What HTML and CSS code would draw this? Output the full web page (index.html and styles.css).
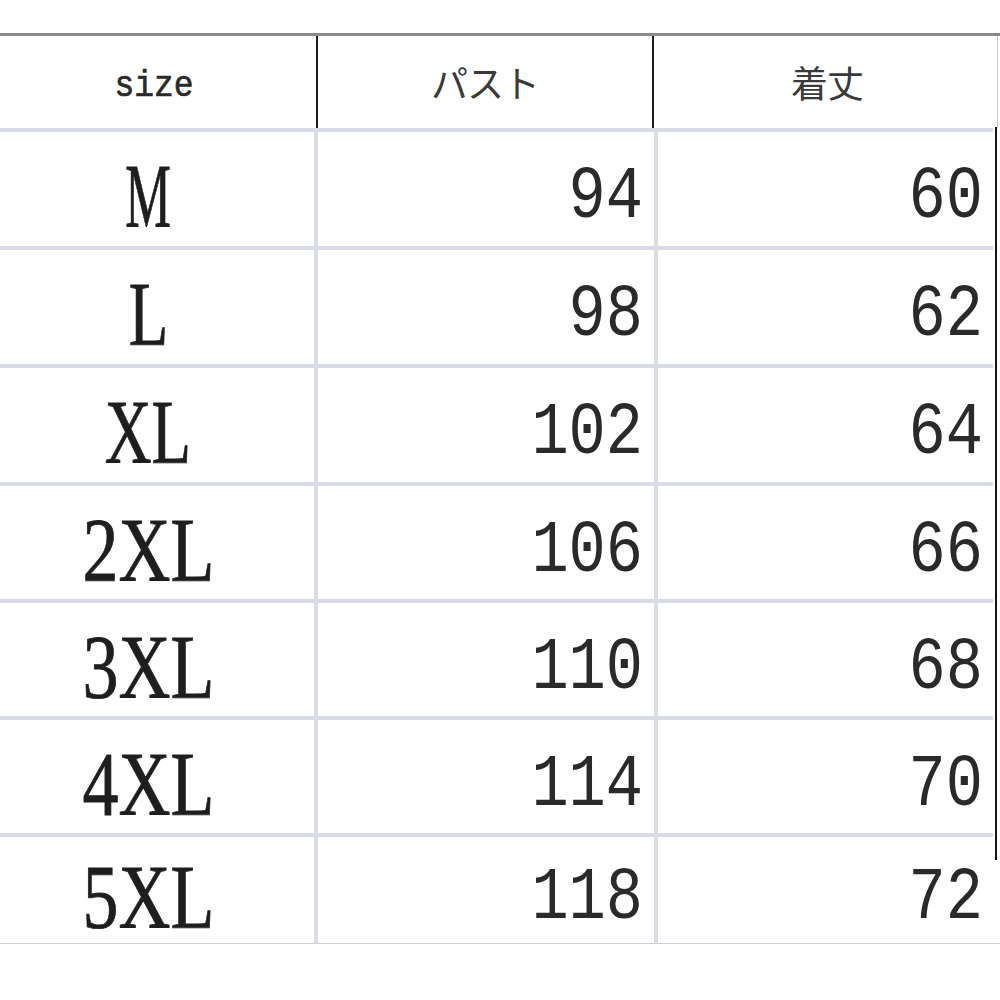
FILE: index.html
```html
<!DOCTYPE html>
<html lang="ja">
<head>
<meta charset="utf-8">
<title>size</title>
<link rel="stylesheet" href="styles.css">
</head>
<body>
<div class="sheet">
  <div class="head">
    <div class="hc c1"><span class="mono-h">size</span></div>
    <div class="hc c2"><span class="jp">パスト</span></div>
    <div class="hc c3"><span class="jp">着丈</span></div>
  </div>
  <div class="body">
    <div class="row">
      <div class="cell c1"><span class="sz sz-m">M</span></div>
      <div class="cell c2"><span class="num">94</span></div>
      <div class="cell c3"><span class="num">60</span></div>
      <div class="gap"></div>
    </div>
    <div class="row">
      <div class="cell c1"><span class="sz sz-l">L</span></div>
      <div class="cell c2"><span class="num">98</span></div>
      <div class="cell c3"><span class="num">62</span></div>
      <div class="gap"></div>
    </div>
    <div class="row">
      <div class="cell c1"><span class="sz sz-xl">XL</span></div>
      <div class="cell c2"><span class="num">102</span></div>
      <div class="cell c3"><span class="num">64</span></div>
      <div class="gap"></div>
    </div>
    <div class="row">
      <div class="cell c1"><span class="sz">2XL</span></div>
      <div class="cell c2"><span class="num">106</span></div>
      <div class="cell c3"><span class="num">66</span></div>
      <div class="gap"></div>
    </div>
    <div class="row">
      <div class="cell c1"><span class="sz">3XL</span></div>
      <div class="cell c2"><span class="num">110</span></div>
      <div class="cell c3"><span class="num">68</span></div>
      <div class="gap"></div>
    </div>
    <div class="row">
      <div class="cell c1"><span class="sz">4XL</span></div>
      <div class="cell c2"><span class="num">114</span></div>
      <div class="cell c3"><span class="num">70</span></div>
      <div class="gap"></div>
    </div>
    <div class="row last">
      <div class="cell c1"><span class="sz">5XL</span></div>
      <div class="cell c2"><span class="num">118</span></div>
      <div class="cell c3"><span class="num">72</span></div>
      <div class="gap"></div>
    </div>
  </div>
  <div class="edge"></div>
  <div class="edge-top"></div>
</div>
</body>
</html>
```

FILE: styles.css
```css
* { box-sizing: border-box; }

body {
  margin: 0;
  background: #ffffff;
  width: 1000px;
  height: 1000px;
  overflow: hidden;
}

.sheet {
  margin-top: 33px;
  border-top: 3px solid #8a8a8a;
  position: relative;
}

.head {
  display: grid;
  grid-template-columns: 318px 336px 1fr;
  height: 92px;
}

.hc {
  display: flex;
  align-items: center;
  justify-content: center;
}

.head .c1,
.head .c2 {
  border-right: 2px solid #1e1e1e;
}

.head .c1 { padding-right: 8px; }

.mono-h {
  font-family: "Liberation Mono", "DejaVu Sans Mono", monospace;
  font-size: 33px;
  line-height: 1;
  color: #2a2a2a;
  display: inline-block;
  transform: scaleY(1.12);
  margin-top: 9px;
  -webkit-text-stroke: 0.6px #2a2a2a;
}

.jp {
  font-family: "Noto Sans CJK JP", "Noto Sans", sans-serif;
  font-size: 37px;
  line-height: 1;
  color: #3a3a3a;
  letter-spacing: -1px;
}

.row {
  display: grid;
  grid-template-columns: 318px 340px 335px 1fr;
  height: 117px;
}

.row:nth-child(-n+3) { height: 118px; }

.row.last {
  height: 111px;
  border-bottom: 1px solid #cfcfd4;
}

.cell {
  border-top: 4px solid #d9dce8;
  display: flex;
  align-items: center;
  padding-top: 16px;
}

.cell.c1,
.cell.c2 {
  border-right: 4px solid #d9dce8;
}

.cell.c1 {
  justify-content: center;
  padding-right: 18px;
}

.cell.c2 {
  justify-content: flex-end;
  padding-right: 11px;
}

.cell.c3 {
  justify-content: flex-end;
  padding-right: 10px;
}

.sz {
  font-family: "Liberation Serif", "DejaVu Serif", serif;
  font-size: 90px;
  line-height: 1;
  color: #1e1e1e;
  display: inline-block;
  transform: scaleX(0.8);
  -webkit-text-stroke: 0.8px #1e1e1e;
}

.sz-m { transform: scaleX(0.57); }
.sz-l { transform: scaleX(0.72); }
.sz-xl { transform: scaleX(0.72); }

.num {
  font-family: "Liberation Mono", "DejaVu Sans Mono", monospace;
  font-size: 62px;
  line-height: 1;
  color: #2a2a2a;
  display: inline-block;
  transform: scaleY(1.2);
  transform-origin: 50% 50%;
  margin-top: 2px;
}

.edge {
  position: absolute;
  left: 995px;
  top: 91px;
  width: 2px;
  height: 733px;
  background: #151515;
}

.edge-top {
  position: absolute;
  left: 997px;
  top: 0;
  width: 1px;
  height: 92px;
  background: #c8c8c8;
}
```
